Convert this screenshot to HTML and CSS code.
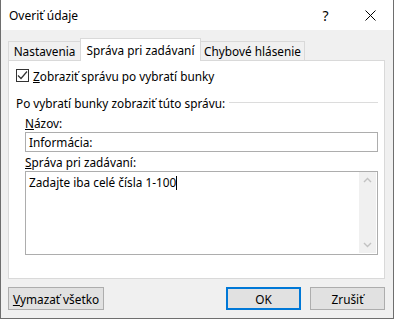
FILE: index.html
```html
<!DOCTYPE html>
<html lang="sk">

<head>
    <meta charset="UTF-8">
    <title>Overiť údaje</title>
    <link rel="stylesheet" href="styles.css">
</head>

<body>
    <div class="window">
        <div class="titlebar">
            <span class="title">Overiť údaje</span>
            <span class="title-btn">?</span>
            <span class="title-btn">
                <svg width="11" height="11" viewBox="0 0 11 11">
                    <path d="M0.5 0.5 L10.5 10.5 M10.5 0.5 L0.5 10.5" stroke="#000" stroke-width="1" fill="none"/>
                </svg>
            </span>
        </div>
        <div class="content">
            <div class="tabs">
                <div class="tab tab-first">Nastavenia</div>
                <div class="tab tab-active">Správa pri zadávaní</div>
                <div class="tab tab-last">Chybové hlásenie</div>
            </div>
            <div class="panel">
                <div class="check-row">
                    <span class="checkbox">
                        <svg width="11" height="11" viewBox="0 0 11 11">
                            <path d="M1 5.5 L4 8.5 L10 1.5" stroke="#333" stroke-width="1.2" fill="none"/>
                        </svg>
                    </span>
                    <span><u>Z</u>obraziť správu po vybratí bunky</span>
                </div>
                <div class="group-title">
                    <span>Po vybratí bunky zobraziť túto správu:</span>
                    <span class="group-line"></span>
                </div>
                <div class="field-label"><u>N</u>ázov:</div>
                <div class="input">Informácia:</div>
                <div class="field-label field-label-2"><u>S</u>práva pri zadávaní:</div>
                <div class="textarea">
                    <div class="textarea-text">Zadajte iba celé čísla 1-100<span class="caret"></span></div>
                    <div class="scrollbar">
                        <svg width="17" height="17" viewBox="0 0 17 17">
                            <path d="M5 10 L8.5 6.5 L12 10" stroke="#c2c2c2" stroke-width="1.4" fill="none"/>
                        </svg>
                        <svg width="17" height="17" viewBox="0 0 17 17">
                            <path d="M5 7 L8.5 10.5 L12 7" stroke="#c2c2c2" stroke-width="1.4" fill="none"/>
                        </svg>
                    </div>
                </div>
            </div>
            <div class="buttons">
                <button class="btn btn-clear"><u>V</u>ymazať všetko</button>
                <button class="btn btn-ok">OK</button>
                <button class="btn">Zrušiť</button>
            </div>
        </div>
    </div>
</body>

</html>
```

FILE: styles.css
```css
body {
    margin: 0;
    font-family: "Noto Sans", "Open Sans", sans-serif;
    font-size: 11.8px;
    color: #000;
}

.window {
    width: 392px;
    height: 318px;
    border: 1px solid #6e6e6e;
    border-top: none;
    background-color: #f0f0f0;
}

/* title bar */
.titlebar {
    height: 30px;
    background: #fff;
    display: flex;
    align-items: center;
}

.title {
    padding-left: 8px;
    font-size: 12px;
    flex: 1;
}

.title-btn {
    width: 45px;
    height: 30px;
    display: flex;
    align-items: center;
    justify-content: center;
    font-size: 14px;
}

/* tabs */
.content {
    padding: 8px 8px 0 7px;
}

.tabs {
    display: flex;
    align-items: flex-end;
    height: 22px;
}

.tab {
    height: 18px;
    line-height: 18px;
    border: 1px solid #d9d9d9;
    border-bottom: none;
    text-align: center;
    background: #f0f0f0;
}

.tab-first {
    width: 71px;
}

.tab-active {
    width: 119px;
    height: 22px;
    line-height: 22px;
    margin-bottom: -1px;
    margin-left: -1px;
    background: #fff;
    position: relative;
    z-index: 1;
}

.tab-last {
    width: 103px;
    margin-left: -1px;
}

.panel {
    height: 217px;
    border: 1px solid #d9d9d9;
    background: #fff;
    padding: 0 6px 0 7px;
}

.check-row {
    display: flex;
    align-items: center;
    height: 15px;
    margin-top: 7px;
}

.checkbox {
    width: 11px;
    height: 11px;
    border: 1px solid #333;
    margin-right: 4px;
    display: flex;
}

.group-title {
    display: flex;
    align-items: center;
    height: 16px;
    margin-top: 12px;
}

.group-line {
    flex: 1;
    height: 1px;
    background: #dcdcdc;
    margin-left: 4px;
    margin-top: -1px;
}

.field-label {
    margin: 4px 0 0 9px;
    line-height: 16px;
}

.field-label-2 {
    margin-top: 2px;
}

.input {
    margin: 1px 0 0 9px;
    height: 18px;
    line-height: 18px;
    border: 1px solid #adadad;
    padding-left: 3px;
}

.textarea {
    margin: 1px 0 0 9px;
    height: 82px;
    border: 1px solid #adadad;
    display: flex;
}

.textarea-text {
    flex: 1;
    padding: 2px 0 0 3px;
    line-height: 16px;
}

.caret {
    display: inline-block;
    width: 1px;
    height: 14px;
    background: #000;
    vertical-align: -3px;
}

.scrollbar {
    width: 17px;
    height: 81px;
    margin-right: 1px;
    background: #f0f0f0;
    display: flex;
    flex-direction: column;
    justify-content: space-between;
}

/* buttons */
.buttons {
    display: flex;
    margin-top: 8px;
}

.btn {
    font-family: inherit;
    font-size: 11.8px;
    width: 75px;
    height: 23px;
    padding: 0;
    border: 1px solid #adadad;
    background: #e1e1e1;
    color: #000;
}

.btn-clear {
    width: 96px;
    margin-right: auto;
}

.btn-ok {
    border: 2px solid #0078d7;
    margin-right: 9px;
}
```
